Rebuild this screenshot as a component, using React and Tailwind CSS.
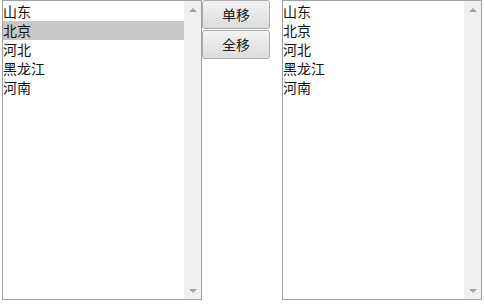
const provinces = ['山东', '北京', '河北', '黑龙江', '河南'];

const ListBox = ({ items, selected }) => (
  <div className="flex h-[300px] w-[200px] border border-[#a0a0a0] bg-white">
    <div className="flex-1 pt-px">
      {items.map((name) => (
        <div
          key={name}
          className={`h-[19px] text-[14px] leading-[19px] text-[#111] ${
            name === selected ? 'bg-[#c8c8c8]' : ''
          }`}
        >
          {name}
        </div>
      ))}
    </div>
    {/* scrollbar */}
    <div className="flex w-[17px] flex-col justify-between bg-[#f0f0f0]">
      <div className="flex h-[17px] items-center justify-center">
        <div className="h-0 w-0 border-x-[4px] border-b-[4px] border-x-transparent border-b-[#a3a3a3]" />
      </div>
      <div className="flex h-[17px] items-center justify-center">
        <div className="h-0 w-0 border-x-[4px] border-t-[4px] border-x-transparent border-t-[#a3a3a3]" />
      </div>
    </div>
  </div>
);

const MoveButton = ({ label }) => (
  <button className="h-[29px] w-[68px] rounded-[3px] border border-[#acacac] bg-gradient-to-b from-[#f2f2f2] to-[#dddddd] text-[14px] text-[#222]">
    {label}
  </button>
);

export default function App() {
  return (
    <div
      className="flex w-[484px] h-[304px] bg-white pl-[2px]"
      style={{ fontFamily: '"Microsoft YaHei", "Noto Sans CJK SC", sans-serif' }}
    >
      <ListBox items={provinces} selected="北京" />
      <div className="flex flex-col gap-[1px]">
        <MoveButton label="单移" />
        <MoveButton label="全移" />
      </div>
      <div className="ml-[12px]">
        <ListBox items={provinces} />
      </div>
    </div>
  );
}
